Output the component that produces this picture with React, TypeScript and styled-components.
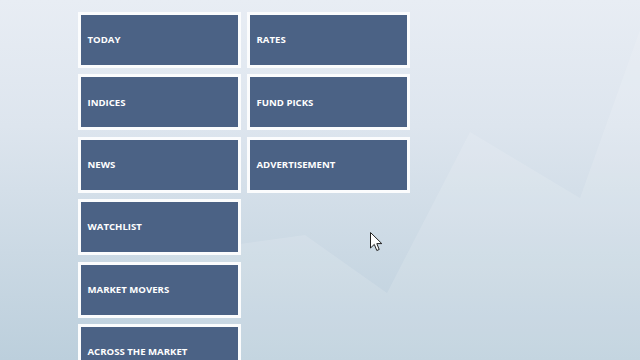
import React from "react";
import styled, { createGlobalStyle } from "styled-components";

const Global = createGlobalStyle`
  html, body {
    margin: 0;
    padding: 0;
    width: 640px;
    height: 360px;
    overflow: hidden;
  }
  body {
    font-family: "Open Sans", "Liberation Sans", sans-serif;
  }
`;

const Screen = styled.div`
  position: relative;
  width: 640px;
  height: 360px;
  overflow: hidden;
  background: linear-gradient(180deg, #e8edf4 0%, #dde5ee 35%, #cbd9e4 70%, #bccfdc 100%);
`;

const Backdrop = styled.svg`
  position: absolute;
  inset: 0;
  width: 640px;
  height: 360px;
`;

const TileGrid = styled.div`
  position: relative;
  display: grid;
  grid-auto-flow: column;
  grid-template-rows: repeat(6, 56px);
  grid-auto-columns: 163px;
  row-gap: 6.4px;
  column-gap: 6px;
  padding: 12px 0 0 78px;
`;

const Tile = styled.div`
  box-sizing: border-box;
  width: 163px;
  height: 56px;
  border: 3px solid #fbfcfd;
  background: #4b6285;
  display: flex;
  align-items: center;
  padding-left: 6.5px;
`;

const TileLabel = styled.span`
  color: #ffffff;
  font-family: "Open Sans", "Liberation Sans", sans-serif;
  font-weight: 700;
  font-size: 9.6px;
  letter-spacing: 0;
  text-transform: uppercase;
  line-height: 1;
`;

const Cursor = styled.svg`
  position: absolute;
  left: 370px;
  top: 232px;
  width: 14px;
  height: 22px;
`;

const tiles = [
  "Today",
  "Indices",
  "News",
  "Watchlist",
  "Market Movers",
  "Across the Market",
  "Rates",
  "Fund Picks",
  "Advertisement",
];

export default function App() {
  return (
    <>
      <Global />
      <Screen>
        <Backdrop viewBox="0 0 640 360">
          <polygon
            points="150,252 240,244 305,235 387,293 470,132 580,198 640,30 640,360 150,360"
            fill="#ffffff"
            opacity="0.13"
          />
        </Backdrop>
        <TileGrid>
          {tiles.map((t) => (
            <Tile key={t}>
              <TileLabel>{t}</TileLabel>
            </Tile>
          ))}
        </TileGrid>
        <Cursor viewBox="0 0 14 22">
          <path
            d="M0.5 0.5 L0.5 16 L4.3 12.4 L6.8 18.5 L9.2 17.5 L6.8 11.6 L11.8 11.6 Z"
            fill="#ffffff"
            stroke="#222"
            strokeWidth="1"
            strokeLinejoin="miter"
          />
        </Cursor>
      </Screen>
    </>
  );
}
